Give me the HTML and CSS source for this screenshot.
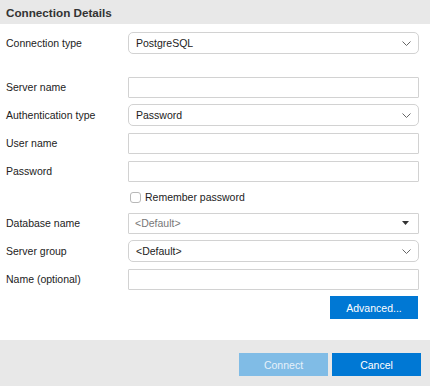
FILE: index.html
```html
<!DOCTYPE html>
<html>
<head>
<meta charset="utf-8">
<link rel="stylesheet" href="styles.css">
</head>
<body>
<div class="dialog">
  <div class="header">Connection Details</div>
  <div class="form">
    <div class="row">
      <div class="label">Connection type</div>
      <div class="field select rounded"><span>PostgreSQL</span>
        <svg class="chev" width="9" height="5" viewBox="0 0 9 5"><path d="M0.5 0.5 L4.5 4.5 L8.5 0.5" fill="none" stroke="#666" stroke-width="1"/></svg>
      </div>
    </div>
    <div class="spacer"></div>
    <div class="row">
      <div class="label">Server name</div>
      <div class="field input"></div>
    </div>
    <div class="row">
      <div class="label">Authentication type</div>
      <div class="field select rounded"><span>Password</span>
        <svg class="chev" width="9" height="5" viewBox="0 0 9 5"><path d="M0.5 0.5 L4.5 4.5 L8.5 0.5" fill="none" stroke="#666" stroke-width="1"/></svg>
      </div>
    </div>
    <div class="row">
      <div class="label">User name</div>
      <div class="field input"></div>
    </div>
    <div class="row">
      <div class="label">Password</div>
      <div class="field input"></div>
    </div>
    <div class="row check-row">
      <div class="label"></div>
      <label class="check"><span class="box"></span><span>Remember password</span></label>
    </div>
    <div class="row">
      <div class="label">Database name</div>
      <div class="field select square"><span class="placeholder">&lt;Default&gt;</span>
        <svg class="tri" width="7" height="4" viewBox="0 0 7 4"><path d="M0 0 L7 0 L3.5 4 Z" fill="#333"/></svg>
      </div>
    </div>
    <div class="row">
      <div class="label">Server group</div>
      <div class="field select rounded"><span>&lt;Default&gt;</span>
        <svg class="chev" width="9" height="5" viewBox="0 0 9 5"><path d="M0.5 0.5 L4.5 4.5 L8.5 0.5" fill="none" stroke="#666" stroke-width="1"/></svg>
      </div>
    </div>
    <div class="row">
      <div class="label">Name (optional)</div>
      <div class="field input"></div>
    </div>
    <div class="adv-row">
      <button class="btn primary adv">Advanced...</button>
    </div>
  </div>
  <div class="footer">
    <button class="btn disabled">Connect</button>
    <button class="btn primary">Cancel</button>
  </div>
</div>
</body>
</html>
```
FILE: styles.css
```css
* { box-sizing: border-box; }
html, body { margin: 0; padding: 0; background: #fff; }
body {
  font-family: "Liberation Sans", Arial, sans-serif;
  font-size: 10.5px;
  color: #222;
  width: 430px;
  height: 386px;
}
.dialog { display: flex; flex-direction: column; height: 386px; }
.header {
  height: 24px;
  background: #e8e8e8;
  font-weight: bold;
  font-size: 11.7px;
  color: #333;
  padding-left: 6px;
  display: flex;
  align-items: center;
}
.form {
  flex: 1;
  padding: 8px 11px 0 6px;
  display: flex;
  flex-direction: column;
  gap: 6px;
}
.spacer { height: 10px; }
.row { display: flex; align-items: center; height: 22px; }
.label { width: 122px; flex: none; color: #222; }
.field {
  flex: 1;
  height: 22px;
  border: 1px solid #d2d2d2;
  background: #fff;
  display: flex;
  align-items: center;
  padding: 0 7px;
  color: #222;
}
.input { height: 21px; border-radius: 1px; }
.rounded { border-radius: 5px; }
.square { border-radius: 1px; height: 21px; padding-left: 6px; }
.select { justify-content: space-between; }
.tri { margin-right: 2px; }
.placeholder { color: #777; }
.check-row { height: 18px; }
.check { display: flex; align-items: center; gap: 4px; padding-left: 2px; }
.box {
  width: 11px; height: 11px;
  border: 1px solid #b8b8b8;
  border-radius: 3px;
  background: #fff;
}
.adv-row { display: flex; justify-content: flex-end; padding-right: 1px; }
.btn {
  font-family: inherit;
  font-size: 10.5px;
  width: 89px;
  height: 23px;
  border: none;
  color: #fff;
  padding: 0;
}
.adv { width: 88px; }
.primary { background: #0078d4; }
.disabled { background: #80bce6; color: #e6f1fa; }
.footer {
  height: 46px;
  background: #e8e8e8;
  display: flex;
  justify-content: flex-end;
  align-items: flex-start;
  gap: 4px;
  padding: 13px 9px 0 0;
}
```
